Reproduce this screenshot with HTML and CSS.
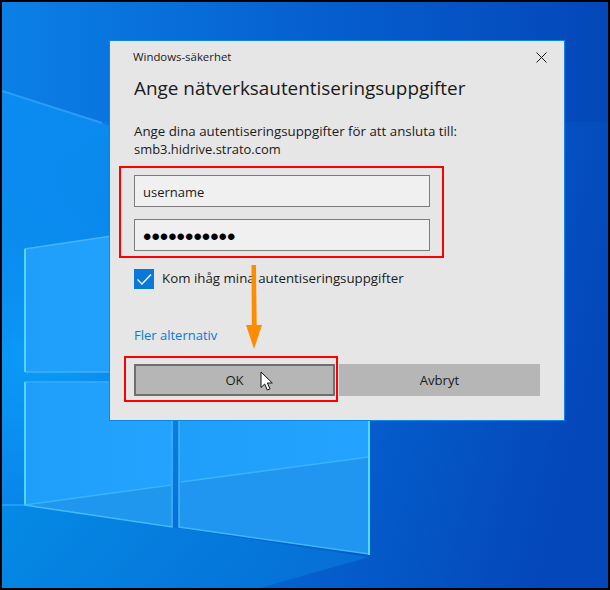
FILE: index.html
```html
<!DOCTYPE html>
<html lang="sv">
<head>
<meta charset="utf-8">
<title>Windows-säkerhet</title>
<link rel="stylesheet" href="styles.css">
</head>
<body>
<div class="screen">
  <svg class="wallpaper" viewBox="0 0 606 586" width="606" height="586" aria-hidden="true">
    <defs>
      <linearGradient id="sky" x1="0" y1="0.3" x2="1" y2="0.55">
        <stop offset="0" stop-color="#0a84e8"/>
        <stop offset="0.35" stop-color="#0670dc"/>
        <stop offset="0.62" stop-color="#0560cd"/>
        <stop offset="1" stop-color="#0447ba"/>
      </linearGradient>
      <linearGradient id="top" x1="0" y1="0" x2="1" y2="0">
        <stop offset="0" stop-color="#0b80e6"/>
        <stop offset="0.5" stop-color="#0660d0"/>
        <stop offset="1" stop-color="#0447b9"/>
      </linearGradient>
      <radialGradient id="glow" cx="0.06" cy="0.6" r="0.38">
        <stop offset="0" stop-color="#0b9af8" stop-opacity="1"/>
        <stop offset="1" stop-color="#0b9af8" stop-opacity="0"/>
      </radialGradient>
      <linearGradient id="floor" x1="0" y1="0" x2="1" y2="0.2">
        <stop offset="0" stop-color="#058ae6"/>
        <stop offset="1" stop-color="#0670d6"/>
      </linearGradient>
      <linearGradient id="pane" x1="0" y1="0" x2="1" y2="0">
        <stop offset="0" stop-color="#1f9ff9"/>
        <stop offset="1" stop-color="#24a2ff"/>
      </linearGradient>
      <linearGradient id="beam" x1="0" y1="0" x2="0" y2="1">
        <stop offset="0" stop-color="#0b8cf0" stop-opacity="1"/>
        <stop offset="1" stop-color="#0b8cf0" stop-opacity="0.2"/>
      </linearGradient>
    </defs>
    <rect width="606" height="586" fill="url(#sky)"/>
    <rect width="606" height="120" fill="url(#top)"/>
    <rect width="606" height="586" fill="url(#glow)"/>
    <polygon points="0,503 22,503 367,555 258,586 0,586" fill="url(#floor)"/>
    <polygon points="0,88 108,124 108,340 0,340" fill="url(#beam)"/>
    <path d="M0 89 L100 121" stroke="#2a9cf6" stroke-width="2" fill="none"/>
    <polygon points="22,247 169,225 169,370 22,370" fill="url(#pane)"/>
    <polygon points="22,379 169,379 169,524 22,503" fill="url(#pane)"/>
    <polygon points="177,379 367,379 367,552 177,525" fill="url(#pane)"/>
    <polygon points="22,503 169,482 169,524" fill="#2097ee"/>
    <polygon points="177,480 367,455 367,552 177,525" fill="#2096f0"/>
    <path d="M22.500 503 L169 483 M179 480 L367 455" stroke="#38b4fc" stroke-width="1.500" fill="none"/>
    <path d="M23 370 H169" stroke="#3fb0fb" stroke-width="1.500" fill="none"/>
    <path d="M23 380 H108" stroke="#3fb0fb" stroke-width="1" fill="none"/>
    <path d="M22.500 247 L110 234" stroke="#44b4f8" stroke-width="1.500" fill="none"/>
    <path d="M23 247 V370 M23 380 V503" stroke="#50d8fa" stroke-width="2" fill="none"/>
    <path d="M22 503 L170 525 V419" stroke="#45bcf8" stroke-width="1.500" fill="none"/>
    <path d="M177 419 V525 L367 552" stroke="#3fb6f8" stroke-width="1.500" fill="none"/>
    <path d="M367 419 V553" stroke="#4adcfa" stroke-width="2" fill="none"/>
    <path d="M0 503 H22" stroke="#22a8f8" stroke-width="1.500" fill="none"/>
  </svg>

  <section class="dialog">
    <header class="titlebar">
      <span class="app-name">Windows-säkerhet</span>
      <svg class="close" viewBox="0 0 11 11" width="11" height="11" aria-hidden="true">
        <path d="M0.500 0.500 L10.500 10.500 M10.500 0.500 L0.500 10.500" stroke="#1a1a1a" stroke-width="1" fill="none"/>
      </svg>
    </header>
    <h1 class="heading">Ange nätverksautentiseringsuppgifter</h1>
    <p class="message">Ange dina autentiseringsuppgifter för att ansluta till:<br><span class="host">smb3.hidrive.strato.com</span></p>
    <div class="fields">
      <div class="field">username</div>
      <div class="field password">•••••••••••</div>
    </div>
    <div class="remember">
      <span class="checkbox">
        <svg viewBox="0 0 20 20" width="20" height="20" aria-hidden="true">
          <path d="M3.500 10.500 L8 15 L17 5.500" stroke="#fff" stroke-width="1.300" fill="none"/>
        </svg>
      </span>
      <span class="remember-label">Kom ihåg mina autentiseringsuppgifter</span>
    </div>
    <a class="more">Fler alternativ</a>
    <div class="buttons">
      <div class="button primary">OK</div>
      <div class="button">Avbryt</div>
    </div>
  </section>

  <div class="mark mark-fields"></div>
  <div class="mark mark-ok"></div>
  <svg class="arrow" viewBox="0 0 18 86" width="18" height="86" aria-hidden="true">
    <path d="M6.500 0 H11 L11.700 60 H17 L9 84 L1 60 H6.800 Z" fill="#ff8c00"/>
  </svg>
  <svg class="cursor" viewBox="0 0 14 21" width="14" height="21" aria-hidden="true">
    <path d="M1 1 V16.500 L4.700 13 L7.300 19 L10 17.800 L7.400 12 H12.300 Z" fill="#fff" stroke="#111" stroke-width="1"/>
  </svg>
</div>
</body>
</html>
```
FILE: styles.css
```css
* { box-sizing: border-box; }
html, body { margin: 0; padding: 0; background: #000; }
body { font-family: "Open Sans", "Noto Sans", "Liberation Sans", sans-serif; color: #1a1a1a; }

.screen {
  position: relative;
  width: 610px;
  height: 590px;
  border: 2px solid #000;
  padding: 38px 0 0 107px;
  overflow: hidden;
}
.wallpaper { position: absolute; left: 0; top: 0; }

.dialog {
  position: relative;
  width: 456px;
  height: 381px;
  background: #e6e6e6;
  border: 1px solid #0a86e6;
  padding: 1px 24px 0;
}
.titlebar {
  display: flex;
  justify-content: space-between;
  align-items: center;
  height: 28px;
  margin-right: -7px;
}
.app-name { font-size: 11.400px; margin-left: -1px; }
.close { margin-top: 2px; }
.heading {
  margin: 4px 0 0;
  font-size: 18.900px;
  font-weight: 400;
  line-height: 28px;
  white-space: nowrap;
}
.message {
  margin: 20px 0 0;
  font-size: 13.300px;
  line-height: 18px;
  white-space: nowrap;
}
.host { font-size: 12.950px; }
.fields { display: flex; flex-direction: column; gap: 12px; margin-top: 17px; }
.field {
  width: 296px;
  height: 32px;
  background: #f0f0f0;
  border: 1px solid #7c7c7c;
  padding-left: 8px;
  font-size: 13px;
  line-height: 32px;
}
.password {
  font-family: "Liberation Sans", sans-serif;
  font-size: 24px;
  line-height: 34px;
  color: #000;
  padding-left: 8px;
}
.remember { display: flex; align-items: center; gap: 8px; margin-top: 18px; height: 20px; }
.checkbox { display: block; width: 20px; height: 20px; background: #0a78d7; }
.checkbox svg { display: block; }
.remember-label { font-size: 13.300px; line-height: 18px; white-space: nowrap; margin-top: -2px; }
.more {
  display: block;
  margin-top: 36px;
  font-size: 13px;
  line-height: 20px;
  color: #0a78d7;
}
.buttons { display: flex; gap: 4px; margin-top: 19px; }
.button {
  width: 201px;
  height: 32px;
  background: #b6b6b6;
  font-size: 13.100px;
  line-height: 32px;
  text-align: center;
}
.primary { border: 2px solid #6f6f6f; line-height: 28px; }

.mark { position: absolute; border: 2px solid #f00; }
.mark-fields { left: 117px; top: 164px; width: 325px; height: 92px; }
.mark-ok { left: 122px; top: 354px; width: 214px; height: 46px; }
.arrow { position: absolute; left: 243px; top: 263px; }
.cursor { position: absolute; left: 258px; top: 369px; }
```
